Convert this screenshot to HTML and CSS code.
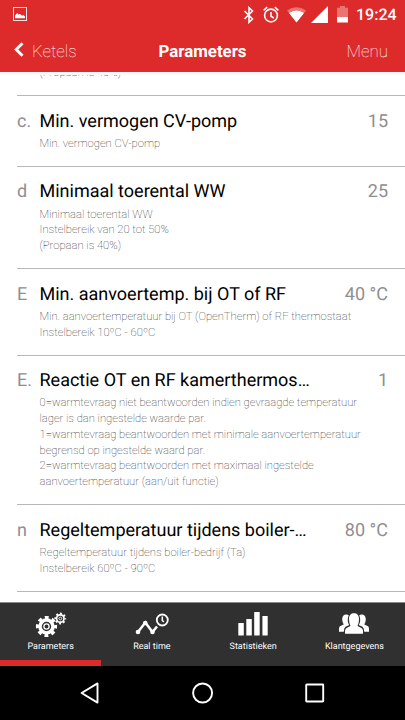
FILE: index.html
```html
<!DOCTYPE html>
<html lang="nl">
<head>
<meta charset="utf-8">
<title>Parameters</title>
<link rel="stylesheet" href="styles.css">
</head>
<body>
<div class="app">
  <header class="header">
    <div class="status">
      <svg class="photo" viewBox="0 0 14 14"><rect x=".5" y=".5" width="13" height="13" fill="none" stroke="#fff" stroke-opacity=".85"/><path fill="#fff" d="M2 11.200V8.500l2.200-2.400 1.400 1.500L7 7l2 1.800 1.400-.7L12 9.500v1.700z"/></svg>
      <div class="system">
        <svg width="12" height="18" viewBox="0 0 12 18"><path d="M2.500 5l8 8L7 16.300V1.700L10.500 5l-8 8" fill="none" stroke="#fff" stroke-width="1.600"/></svg>
        <svg class="alarm" width="16" height="18" viewBox="0 0 16 18"><circle cx="8" cy="9.500" r="6.400" fill="none" stroke="#fff" stroke-width="1.600"/><path d="M8 6v4.200l2.800 1.800M.6 4.300L4.200 1.200M15.400 4.300L11.800 1.200" fill="none" stroke="#fff" stroke-width="1.600"/></svg>
        <svg class="wifi" width="19" height="16" viewBox="0 0 19 16"><path d="M0 3.500Q9.500-3.200 19 3.500L9.500 15.500z" fill="#fff" opacity=".35"/><path d="M2 6Q9.500 1 17 6L9.500 15.500z" fill="#fff"/></svg>
        <svg class="signal" width="17" height="17" viewBox="0 0 17 17"><path d="M0 17L17 0v17z" fill="#fff"/></svg>
        <svg class="battery" width="11" height="17" viewBox="0 0 11 17"><path d="M0 1.700h3V0h5v1.700h3V11H0z" fill="#fff" opacity=".35"/><path d="M0 11h11v5.500H0z" fill="#fff"/></svg>
        <span class="time">19:24</span>
      </div>
    </div>
    <div class="titlebar">
      <div class="back"><svg width="10" height="15" viewBox="0 0 10 15"><path d="M8.500 1.300L2.200 7.500l6.300 6.200" fill="none" stroke="#fff" stroke-width="3"/></svg><span>Ketels</span></div>
      <h1>Parameters</h1>
      <div class="menu">Menu</div>
    </div>
  </header>
  <main class="list">
    <div class="row cut"><p class="desc">(Propaan is 40%)</p></div>
    <div class="row"><span class="code">c.</span><h2>Min. vermogen CV-pomp</h2><span class="value">15</span><p class="desc">Min. vermogen CV-pomp</p></div>
    <div class="row"><span class="code">d</span><h2>Minimaal toerental WW</h2><span class="value">25</span><p class="desc">Minimaal toerental WW<br>Instelbereik van 20 tot 50%<br>(Propaan is 40%)</p></div>
    <div class="row"><span class="code">E</span><h2>Min. aanvoertemp. bij OT of RF</h2><span class="value">40 °C</span><p class="desc">Min. aanvoertemperatuur bij OT (OpenTherm) of RF thermostaat<br>Instelbereik 10ºC - 60ºC</p></div>
    <div class="row"><span class="code">E.</span><h2>Reactie OT en RF kamerthermos…</h2><span class="value">1</span><p class="desc">0=warmtevraag niet beantwoorden indien gevraagde temperatuur<br>lager is dan ingestelde waarde par.<br>1=warmtevraag beantwoorden met minimale aanvoertemperatuur<br>begrensd op ingestelde waard par.<br>2=warmtevraag beantwoorden met maximaal ingestelde<br>aanvoertemperatuur (aan/uit functie)</p></div>
    <div class="row"><span class="code">n</span><h2>Regeltemperatuur tijdens boiler-…</h2><span class="value">80 °C</span><p class="desc">Regeltemperatuur tijdens boiler-bedrijf (Ta)<br>Instelbereik 60ºC - 90ºC</p></div>
    <div class="row last"></div>
  </main>
  <nav class="tabs">
    <div class="tab active">
      <svg width="32" height="26" viewBox="0 0 32 26"><g fill="none" stroke="#fff"><circle cx="11.500" cy="14.500" r="6.500" stroke-width="3.600"/><circle cx="11.500" cy="14.500" r="9" stroke-width="3.200" stroke-dasharray="3.800 3.268" stroke-dashoffset="1.900"/><circle cx="11.500" cy="14.500" r="2.600" stroke-width="1.300"/><circle cx="25.300" cy="6.500" r="3.700" stroke-width="1.700"/><circle cx="25.300" cy="6.500" r="5" stroke-width="1.800" stroke-dasharray="2 1.927" stroke-dashoffset="1"/><circle cx="25.300" cy="6.500" r="1.400" stroke-width=".9"/></g></svg>
      <span>Parameters</span>
    </div>
    <div class="tab">
      <svg width="34" height="26" viewBox="0 0 34 26"><g fill="none" stroke="#fff"><path d="M3 20L10.300 10.500 17.500 20 22 14.500" stroke-width="2.500"/><circle cx="27.300" cy="8" r="5.500" stroke-width="1.800"/><path d="M27.300 4.500v4l1.600 1.500" stroke-width="1.500"/></g><g fill="#fff"><circle cx="3" cy="20" r="2.300"/><circle cx="10.300" cy="11" r="2.300"/><circle cx="17.500" cy="20" r="2.300"/></g></svg>
      <span>Real time</span>
    </div>
    <div class="tab">
      <svg width="30" height="26" viewBox="0 0 30 26"><g fill="#fff"><rect x=".3" y="11" width="5.500" height="12.500" rx=".5"/><rect x="8.300" y="7" width="5.500" height="16.500" rx=".5"/><rect x="16.200" y="0" width="5.500" height="23.500" rx=".5"/><rect x="24.400" y="4" width="5.300" height="19.500" rx=".5"/></g></svg>
      <span>Statistieken</span>
    </div>
    <div class="tab">
      <svg width="32" height="26" viewBox="-1 .8 32 26"><g fill="#fff"><path d="M0 20.500v-3.500q0-2 2.500-2.800L4.700 13.200q-1.500-2.200-1.500-5C3.200 3 8 2.500 9.800 4.200 8 8.500 9 12 10.300 13.800L6.500 15.600q-1.500 1-1.700 4.900zM30 20.500v-3.500q0-2-2.500-2.800l-2.200-1q1.500-2.200 1.500-5c0-5.200-4.800-5.700-6.600-4 1.800 4.300.8 7.800-.5 9.600l3.800 1.800q1.500 1 1.700 4.900z"/><path stroke="#303030" stroke-width="1" paint-order="stroke" d="M6 22.500v-3q0-2.500 2.500-3.200l3-1.500q-1.500-2.800-1.500-6.800C10 3.900 12 2 15 2s5 1.900 5 6q0 4-1.500 6.800l3 1.500q2.500.7 2.500 3.200v3z"/></g></svg>
      <span>Klantgegevens</span>
    </div>
  </nav>
  <footer class="softkeys">
    <svg width="20" height="22" viewBox="0 0 20 22"><path d="M17.500 1.400v19.200L1.600 11z" fill="none" stroke="#fff" stroke-width="1.900" stroke-linejoin="round"/></svg>
    <svg width="22" height="22" viewBox="0 0 22 22"><circle cx="10.600" cy="11" r="9.500" fill="none" stroke="#fff" stroke-width="1.900"/></svg>
    <svg width="20" height="20" viewBox="0 0 20 20"><rect x="1.200" y="1.500" width="17" height="17" rx=".5" fill="none" stroke="#fff" stroke-width="1.900"/></svg>
  </footer>
</div>
</body>
</html>
```
FILE: styles.css
```css
* { box-sizing: border-box; }
body { margin: 0; font-family: Roboto, sans-serif; background: #fff; text-rendering: geometricPrecision; }
h1, h2, p { margin: 0; }
svg { display: block; flex: none; }
.app { width: 405px; height: 720px; display: flex; flex-direction: column; overflow: hidden; }
.header { height: 72px; flex: none; background: #dd2a2a; color: #fff; }
.status { height: 29px; display: flex; justify-content: space-between; padding: 0 9px 0 13px; }
.photo { width: 14px; height: 14px; margin-top: 7px; }
.system { display: flex; align-items: center; }
.alarm { margin-left: 9px; }
.wifi { margin-left: 8px; }
.signal { margin-left: 5px; }
.battery { margin-left: 9px; }
.time { margin-left: 8px; font-size: 16px; font-weight: 500; line-height: 28px; width: 40px; white-space: nowrap; }
.titlebar { height: 43px; display: grid; grid-template-columns: 1fr auto 1fr; align-items: center; padding: 2px 17px 0 14px; }
.titlebar h1 { font-size: 16.875px; font-weight: 700; line-height: 22px; padding-left: 3px; }
.back { display: flex; align-items: center; gap: 8px; font-size: 16.875px; font-weight: 100; }
.back svg { margin-top: -4px; }
.menu { font-size: 16.875px; font-weight: 100; text-align: right; }
.list { flex: none; height: 530px; overflow: hidden; border-top: 3px solid #f7f7f7; }
.row { margin-left: 17px; padding: 14.4px 17px 14.55px 0; border-top: 1px solid #b8b8bb; display: grid; grid-template-columns: 22.5px 1fr auto; row-gap: 4.1px; line-height: 21px; }
.row h2 { font-size: 18px; font-weight: 400; color: #000; white-space: nowrap; line-height: 21px; }
.code, .value { font-size: 18px; color: #8e8e93; white-space: nowrap; }
.desc { grid-column: 2 / 4; font-size: 11.25px; line-height: 15.75px; font-weight: 100; color: #111; white-space: nowrap; }
.cut { height: 20.3px; border: 0; padding: 0 0 14.55px 22.5px; display: flex; align-items: flex-end; }
.last { padding: 0; height: 10px; }
.tabs { height: 64px; flex: none; display: grid; grid-template-columns: repeat(4, 1fr); background: #303030; border-top: 1px solid #8a8a8a; }
.tab { display: flex; flex-direction: column; align-items: center; padding-top: 9px; color: #fff; font-size: 9px; line-height: 14px; border-bottom: 6px solid transparent; }
.tab span { margin-top: 2px; }
.active { border-bottom-color: #dd2a2a; }
.softkeys { height: 54px; flex: none; background: #000; display: flex; align-items: center; justify-content: space-between; padding: 0 80px; }
```
